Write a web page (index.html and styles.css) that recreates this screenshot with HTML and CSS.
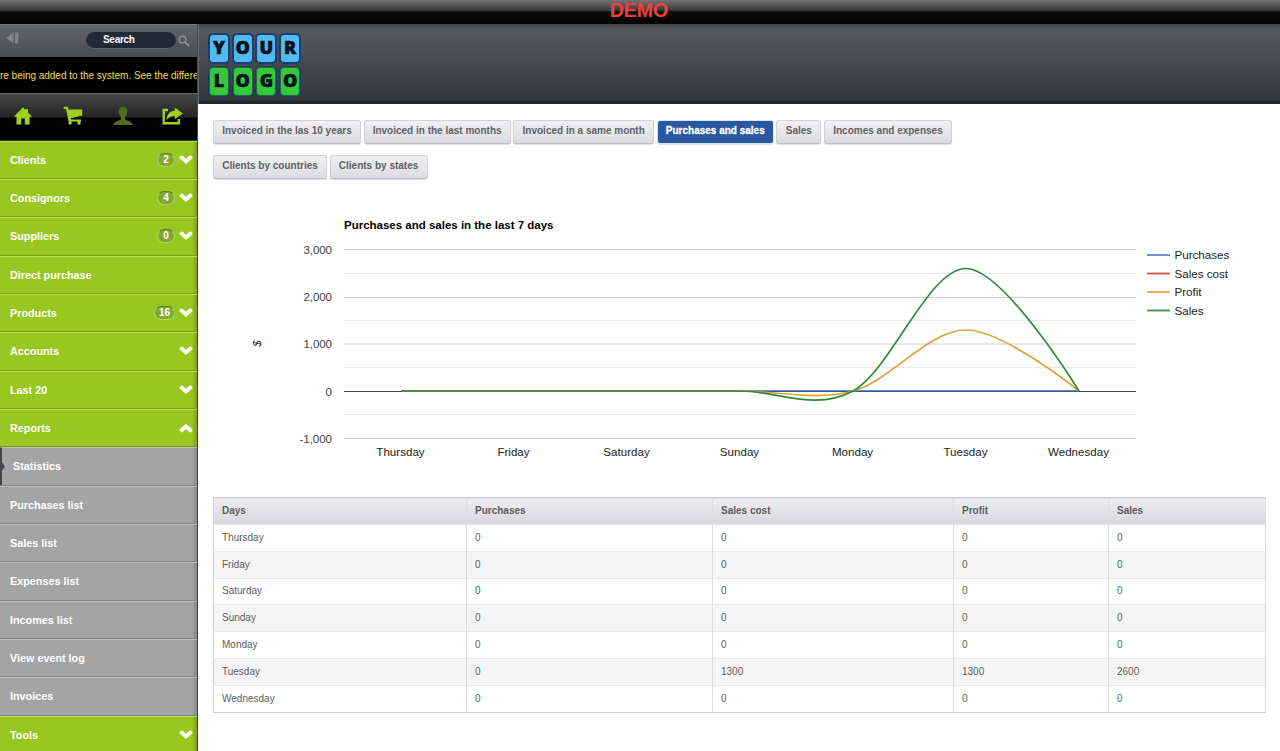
FILE: index.html
```html
<!DOCTYPE html>
<html lang="en">
<head>
<meta charset="utf-8">
<title>Statistics</title>
<link rel="stylesheet" href="styles.css">
</head>
<body>
<svg width="0" height="0" class="defs">
  <symbol id="down" viewBox="0 0 14 10"><path d="M2.600 2.600 7 6.400l4.400-3.800" fill="none" stroke="#fafff0" stroke-width="4" stroke-linecap="round"/></symbol>
  <symbol id="up" viewBox="0 0 14 10"><path d="M2.600 7.300 7 3.500l4.400 3.800" fill="none" stroke="#fafff0" stroke-width="4" stroke-linecap="round"/></symbol>
</svg>
<div class="topbar">DEMO</div>
<div class="layout">
  <aside class="sidebar">
    <div class="searchbar">
      <svg class="collapse" width="14" height="12" viewBox="0 0 14 12"><path d="M7.500 .5v11L0 6zM9 .5h3.300v11H9z" fill="#80828a"/></svg>
      <div class="search">Search</div>
      <svg class="lens" width="12" height="12" viewBox="0 0 12 12"><circle cx="4.500" cy="4.500" r="3.400" fill="none" stroke="#92949a" stroke-width="1.200"/><path d="m7 7 4 4" stroke="#92949a" stroke-width="1.700"/></svg>
    </div>
    <div class="marquee"><span>re being added to the system. See the differe</span></div>
    <nav class="tools">
      <svg width="20" height="20" viewBox="0 0 20 20"><path d="M10 1.300.8 10.800h2.700v7.800h4.800v-6h3.500v6h4.800v-7.800h2.600L15 6.500V3h-2.400v1z" fill="#9fd01f"/></svg>
      <svg width="20" height="20" viewBox="0 0 20 20"><path d="M.6.8h4.200l.7 2.600h13.700v6.200L7.800 12.300l.3 1.300h10v2h-.6v3h-3v-3H8.600v3h-3v-3.200L3 2.800H.6z" fill="#9fd01f"/></svg>
      <svg width="20" height="20" viewBox="0 0 20 20"><path d="M10 .8c3 0 4.500 2 4.200 5-.2 2.500-1 4.200-2 5.300v2.500c1 1.300 7.100 1.600 7.300 5.400H.5c.2-3.800 6.300-4.100 7.300-5.400v-2.500c-1-1.100-1.800-2.800-2-5.300-.3-3 1.200-5 4.200-5z" fill="#536d1a"/></svg>
      <svg width="22" height="20" viewBox="0 0 22 20"><path d="M6 4H1.700v13.200h15.200V13" fill="none" stroke="#9fd01f" stroke-width="2.400"/><path d="M12.800 1.600v3.200C7.500 5.100 4.900 8.500 4.600 14c2.400-3 4.300-4.100 8.200-4.100v3.300l8.100-5.800z" fill="#9fd01f"/></svg>
    </nav>
    <ul class="menu">
      <li><span>Clients</span><b>2</b><svg class="chev"><use href="#down"/></svg></li>
      <li><span>Consignors</span><b>4</b><svg class="chev"><use href="#down"/></svg></li>
      <li><span>Suppliers</span><b>0</b><svg class="chev"><use href="#down"/></svg></li>
      <li><span>Direct purchase</span></li>
      <li><span>Products</span><b class="wide">16</b><svg class="chev"><use href="#down"/></svg></li>
      <li><span>Accounts</span><svg class="chev"><use href="#down"/></svg></li>
      <li><span>Last 20</span><svg class="chev"><use href="#down"/></svg></li>
      <li><span>Reports</span><svg class="chev"><use href="#up"/></svg></li>
      <li class="sub current"><span>Statistics</span></li>
      <li class="sub"><span>Purchases list</span></li>
      <li class="sub"><span>Sales list</span></li>
      <li class="sub"><span>Expenses list</span></li>
      <li class="sub"><span>Incomes list</span></li>
      <li class="sub"><span>View event log</span></li>
      <li class="sub"><span>Invoices</span></li>
      <li><span>Tools</span><svg class="chev"><use href="#down"/></svg></li>
    </ul>
  </aside>
  <main class="main">
    <header class="banner">
      <div class="logo">
        <i>Y</i><i>O</i><i>U</i><i>R</i>
        <i class="g">L</i><i class="g">O</i><i class="g">G</i><i class="g">O</i>
      </div>
    </header>
    <section class="content">
      <div class="tabs">
        <a style="width:148px">Invoiced in the las 10 years</a><a style="width:147px">Invoiced in the last months</a><a style="width:141px">Invoiced in a same month</a><a class="active" style="width:117px">Purchases and sales</a><a style="width:45px">Sales</a><a style="width:128px">Incomes and expenses</a>
      </div>
      <div class="tabs">
        <a style="width:114px">Clients by countries</a><a style="width:98px">Clients by states</a>
      </div>
      <svg class="chart" width="1052" height="300" viewBox="213 190 1052 300">
        <text x="344" y="229" class="title" textLength="209.500">Purchases and sales in the last 7 days</text>
        <g class="minor"><path d="M344 273.500h792M344 320.500h792M344 367.500h792M344 414.500h792"/></g>
        <g class="major"><path d="M344 249.500h792M344 297.500h792M344 344h792M344 438.500h792"/></g>
        <path d="M344 391.500h792" stroke="#444"/>
        <g class="ylab">
          <text x="332" y="254" textLength="28.500">3,000</text><text x="332" y="301.300" textLength="28.500">2,000</text><text x="332" y="348.300" textLength="28.500">1,000</text><text x="332" y="395.500">0</text><text x="332" y="442.700" textLength="32.500">-1,000</text>
        </g>
        <text class="unit" transform="translate(260.500 343.500) rotate(-90)">$</text>
        <g fill="none" stroke-width="1.700">
          <path d="M401 391H1079" stroke="#2f62b5"/>
          <path d="M401 391H740C777.700 391 815.300 401.200 853 391S928.300 330 966 330 1079 391 1079 391" stroke="#dda238"/>
          <path d="M401 391H740C777.700 391 815.300 411.500 853 391S928.300 268.500 966 268.500 1079 391 1079 391" stroke="#2f8b3c"/>
        </g>
        <g class="xlab">
          <text x="400.500" y="455.500">Thursday</text><text x="513.500" y="455.500">Friday</text><text x="626.500" y="455.500">Saturday</text><text x="739.500" y="455.500">Sunday</text><text x="852.500" y="455.500">Monday</text><text x="965.500" y="455.500">Tuesday</text><text x="1078.500" y="455.500">Wednesday</text>
        </g>
        <g class="legend">
          <path d="M1147 255h23" stroke="#5d86c9"/><path d="M1147 273.500h23" stroke="#cc5548"/><path d="M1147 292h23" stroke="#e0ab45"/><path d="M1147 310.500h23" stroke="#3f9150"/>
          <text x="1174.500" y="259.200">Purchases</text><text x="1174.500" y="277.700">Sales cost</text><text x="1174.500" y="296.200">Profit</text><text x="1174.500" y="314.700">Sales</text>
        </g>
      </svg>
      <table class="data">
        <colgroup><col style="width:253px"><col style="width:246px"><col style="width:241px"><col style="width:155px"><col style="width:157px"></colgroup>
        <thead><tr><th>Days</th><th>Purchases</th><th>Sales cost</th><th>Profit</th><th>Sales</th></tr></thead>
        <tbody>
          <tr><td>Thursday</td><td>0</td><td>0</td><td>0</td><td>0</td></tr>
          <tr><td>Friday</td><td>0</td><td>0</td><td>0</td><td>0</td></tr>
          <tr><td>Saturday</td><td>0</td><td>0</td><td>0</td><td>0</td></tr>
          <tr><td>Sunday</td><td>0</td><td>0</td><td>0</td><td>0</td></tr>
          <tr><td>Monday</td><td>0</td><td>0</td><td>0</td><td>0</td></tr>
          <tr><td>Tuesday</td><td>0</td><td>1300</td><td>1300</td><td>2600</td></tr>
          <tr><td>Wednesday</td><td>0</td><td>0</td><td>0</td><td>0</td></tr>
        </tbody>
      </table>
    </section>
  </main>
</div>
</body>
</html>
```
FILE: styles.css
```css
* { box-sizing: border-box; }
body { margin: 0; height: 751px; overflow: hidden; background: #fff; font-family: "Liberation Sans", Arial, sans-serif; }
.defs { display: block; }
.topbar { height: 24px; background: linear-gradient(#747474 0, #3b3b3b 10px, #0c0c0c 12px, #000 24px); color: #ed3f3b; font-size: 19.500px; line-height: 20px; font-weight: bold; text-align: center; padding-right: 2px; }
.layout { display: flex; height: 727px; }
.sidebar { width: 198px; flex: none; overflow: hidden; background: #000; border-right: 1px solid #45493c; }
.searchbar { height: 33px; display: flex; align-items: center; background: linear-gradient(#626469, #4b4d53); border-top: 1px solid #777980; }
.collapse { margin: -6px 0 0 6px; }
.search { width: 90px; height: 17px; margin: -1px 0 0 66px; padding-left: 17px; border-radius: 9px; background: #202a34; border-bottom: 1px solid #62666d; color: #fff; font-size: 10px; letter-spacing: -.3px; line-height: 16px; font-weight: bold; }
.lens { margin-left: 2px; }
.marquee { height: 36px; overflow: hidden; background: #000; color: #f2dc4a; font-size: 10px; line-height: 37px; letter-spacing: -.02px; white-space: nowrap; }
.tools { height: 47.500px; display: flex; align-items: center; gap: 30px; padding-left: 13px; padding-bottom: 1px; background: linear-gradient(#484848 0, #242424 23px, #030303 24px, #000); border-top: 1px solid #626262; border-bottom: 1px solid #333; }
.tools svg { flex: none; }
.tools svg:last-child { margin-left: -1px; }
.menu { list-style: none; margin: 0; padding: 0; }
.menu li { height: 38.350px; display: flex; align-items: center; padding: 0 4px 0 10px; background: linear-gradient(90deg, transparent 192px, #0003), #98c722; border-top: 1px solid #b7dd58; border-bottom: 1px solid #789d20; color: #fff; font-size: 10.800px; font-weight: bold; }
.menu span { flex: 1; }
.menu b { width: 18px; height: 14px; border: 1px solid #b0d65b; border-top-color: #648019; border-radius: 8px; background: #83a831; font-size: 10px; line-height: 12px; text-align: center; margin-right: 4px; }
.menu .wide { width: 21px; }
.chev { width: 14px; height: 10px; }
.menu .sub { background: linear-gradient(90deg, transparent 192px, #0003), #a4a4a4; border-top-color: #bebebe; border-bottom-color: #858585; }
.menu .current { padding-left: 0; }
.current::before { content: ""; width: 5px; height: 38px; margin-right: 8px; background: #45464a; clip-path: polygon(0 0, 2px 0, 2px 15px, 5px 19px, 2px 23px, 2px 38px, 0 38px); }
.main { flex: 1; min-width: 0; }
.banner { height: 80px; padding: 10px 0 0 10px; background: linear-gradient(#434448 0, #57585d 6px, #34373b 76px, #252629 77px); border-left: 1px solid #696b70; }
.logo { width: 92px; display: grid; grid-template-columns: repeat(4, 20px); column-gap: 3.700px; row-gap: 4px; }
.logo i { height: 29px; border: 1px solid #143f70; border-radius: 4px; box-shadow: 0 0 0 1px #173d68; background: #52b8f0; color: #08131c; font: 800 18px/25px "Open Sans", sans-serif; text-align: center; -webkit-text-stroke: .6px #08131c; }
.logo .g { background: #35c83b; border-color: #20664a; }
.content { padding: 16px 15px 0; }
.tabs { display: flex; gap: 2.600px; height: 24px; margin-bottom: 11px; }
.tabs a { height: 24px; flex: none; border: 1px solid #d0d0d5; border-bottom-color: #bcbcc2; border-radius: 3px; background: linear-gradient(#f1f1f3, #dcdce1); box-shadow: 0 1px 1px #0002; color: #606166; font-size: 10px; line-height: 20px; font-weight: bold; text-align: center; white-space: nowrap; }
.tabs .active { background: #28589d; border-color: #dce2ef; color: #fff; -webkit-text-stroke: .3px #fff; }
.chart { display: block; font-size: 11.600px; }
.title { font-weight: bold; font-size: 11.500px; }
.minor path { stroke: #e9e9e9; }
.major path { stroke: #cfcfcf; }
.ylab { text-anchor: end; fill: #444; }
.xlab { text-anchor: middle; fill: #222; }
.unit { font-style: italic; fill: #222; text-anchor: middle; }
.legend { fill: #222; stroke-width: 1.800px; }
.legend text { stroke: none; }
.data { width: 1052px; table-layout: fixed; border-collapse: collapse; margin-top: 7px; border: 1px solid #cdcdd3; color: #5d5d60; font-size: 10px; }
.data th, .data td { height: 26.850px; padding: 0 8px 1px; text-align: left; border-right: 1px solid #dcdce1; }
.data td { border-top: 1px solid #e9e9e9; }
.data th { background: linear-gradient(#eeeef3, #d6d6dc); }
.data tbody tr:nth-child(even) { background: #f5f5f5; }
```
